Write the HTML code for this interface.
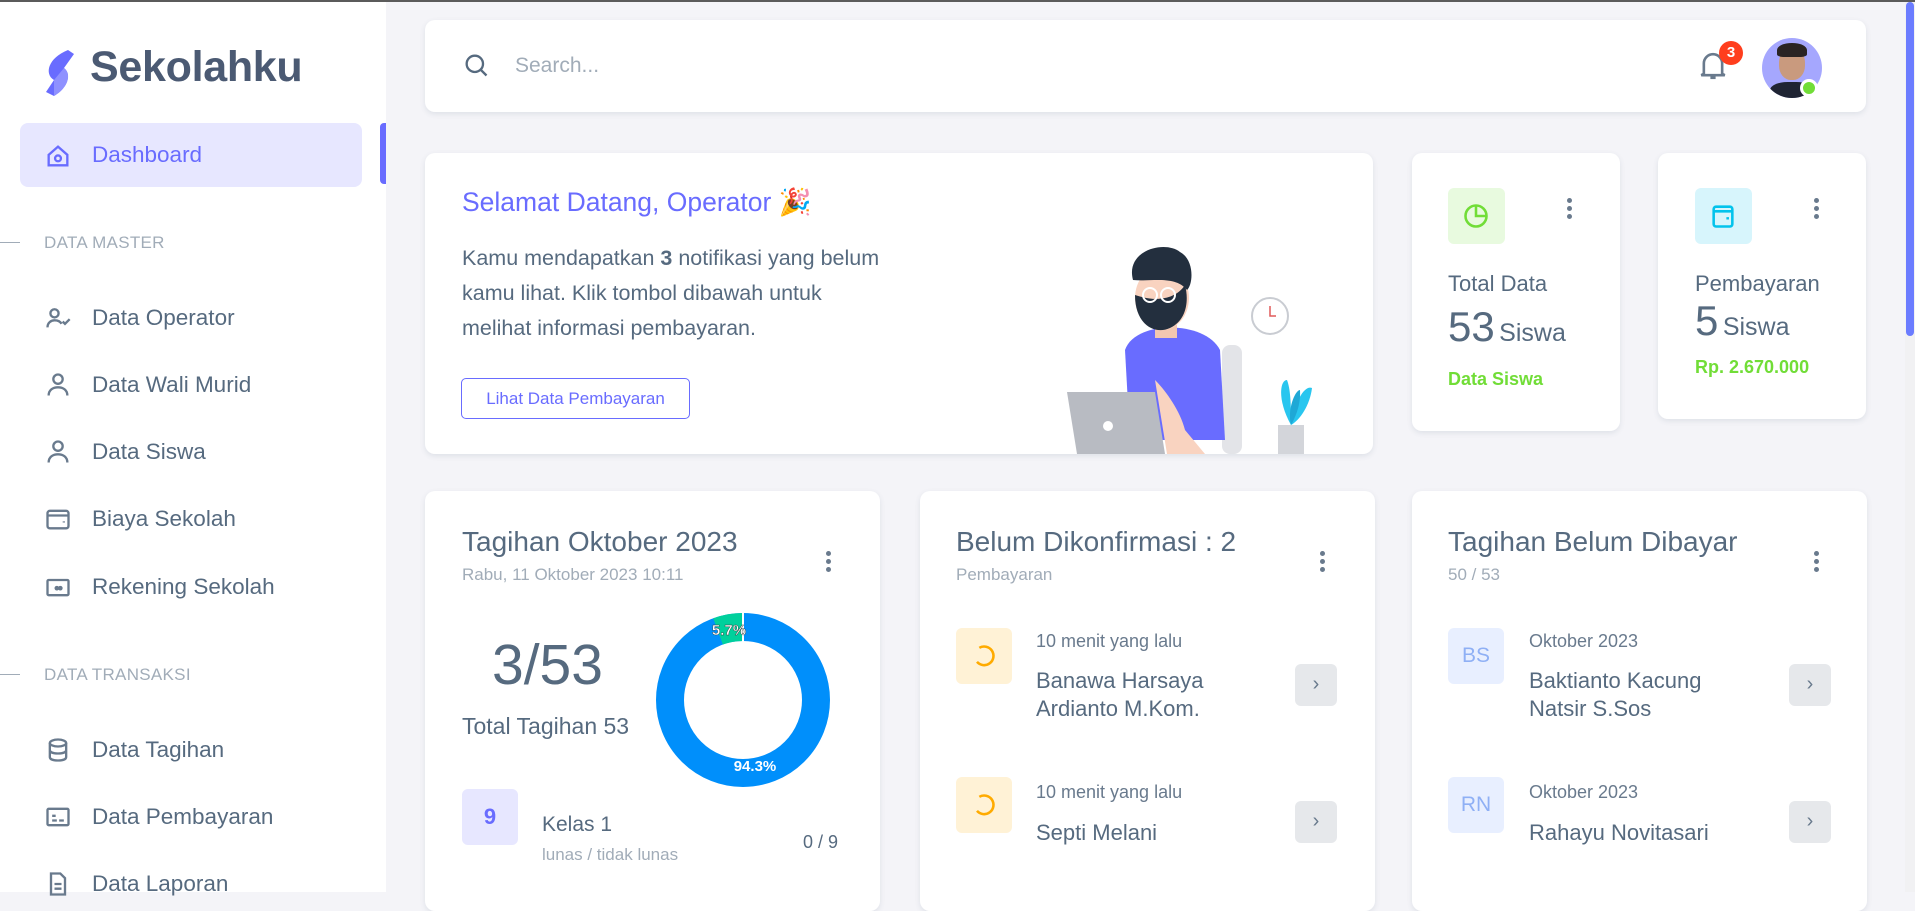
<!DOCTYPE html>
<html><head><meta charset="utf-8">
<style>
*{margin:0;padding:0;box-sizing:border-box}
body{width:1915px;height:892px;overflow:hidden;background:#f4f4f8;font-family:"Liberation Sans",sans-serif;color:#566a7f;position:relative}
.a{position:absolute}
.topline{left:0;top:0;width:1915px;height:2px;background:#5b5b5b}
.side{left:0;top:2px;width:386px;height:890px;background:#fff}
.card{position:absolute;background:#fff;border-radius:10px;box-shadow:0 2px 6px rgba(67,89,113,.12)}
.nav{position:absolute;left:92px;font-size:22.5px;color:#566a7f;line-height:1}
.ico{position:absolute;left:44px}
.sec{position:absolute;left:44px;font-size:17px;color:#a1acb8;letter-spacing:.3px}
.secl{position:absolute;left:0;width:20px;height:1px;background:#a1acb8}
.dots{position:absolute;width:5px}
.dots i{display:block;width:5px;height:5px;border-radius:50%;background:#697a8d;margin-bottom:3px}
.btnr{position:absolute;width:42px;height:42px;border-radius:6px;background:#e6e8eb;color:#697a8d;font-size:20px;text-align:center;line-height:40px}
</style></head><body>
<div class="a topline"></div>
<div class="a side"></div>
<svg class="a" style="left:42px;top:48px" width="34" height="50" viewBox="0 0 34 50">
<path d="M26 2 L32 6 L22 20 C30 26 26 40 12 48 L4 44 L12 32 C2 26 6 10 26 2Z" fill="#696cff"/>
<path d="M12 32 L22 20 C30 26 26 40 12 48 Z" fill="#8f91ff"/>
</svg>
<div class="a" style="left:90px;top:43px;font-size:43px;font-weight:bold;color:#4b5a73;letter-spacing:-.3px">Sekolahku</div>
<div class="a" style="left:20px;top:123px;width:342px;height:64px;background:#e7e7ff;border-radius:8px"></div>
<div class="a" style="left:380px;top:123px;width:6px;height:61px;background:#696cff;border-radius:4px 0 0 4px"></div>
<svg class="ico" style="top:142px" width="28" height="28" viewBox="0 0 24 24" fill="none" stroke="#696cff" stroke-width="2"><path d="M4 11 L12 4 L20 11 V20 H4Z"/><circle cx="12" cy="14" r="2.5"/></svg>
<div class="nav" style="top:144px;color:#696cff">Dashboard</div>
<div class="secl" style="top:242px"></div><div class="sec" style="top:233px">DATA MASTER</div>
<svg class="ico" style="top:304px" width="28" height="28" viewBox="0 0 24 24" fill="none" stroke="#697a8d" stroke-width="2"><circle cx="9" cy="8" r="3.5"/><path d="M3 20c0-4 3-6 6-6s5 1 6 3"/><path d="M16 15l2 2 4-4"/></svg>
<div class="nav" style="top:307px">Data Operator</div>
<svg class="ico" style="top:371px" width="28" height="28" viewBox="0 0 24 24" fill="none" stroke="#697a8d" stroke-width="2"><circle cx="12" cy="7" r="4"/><path d="M4 21c0-5 4-7 8-7s8 2 8 7"/></svg>
<div class="nav" style="top:374px">Data Wali Murid</div>
<svg class="ico" style="top:438px" width="28" height="28" viewBox="0 0 24 24" fill="none" stroke="#697a8d" stroke-width="2"><circle cx="12" cy="7" r="4"/><path d="M4 21c0-5 4-7 8-7s8 2 8 7"/></svg>
<div class="nav" style="top:441px">Data Siswa</div>
<svg class="ico" style="top:505px" width="28" height="28" viewBox="0 0 24 24" fill="none" stroke="#697a8d" stroke-width="2"><rect x="3" y="5" width="18" height="15" rx="2"/><path d="M3 9h18M17 14v1"/></svg>
<div class="nav" style="top:508px">Biaya Sekolah</div>
<svg class="ico" style="top:573px" width="28" height="28" viewBox="0 0 24 24" fill="none" stroke="#697a8d" stroke-width="2"><rect x="3" y="6" width="18" height="13" rx="1"/><circle cx="11" cy="13" r="1" fill="#697a8d"/><circle cx="14" cy="13" r="1" fill="#697a8d"/></svg>
<div class="nav" style="top:576px">Rekening Sekolah</div>
<div class="secl" style="top:674px"></div><div class="sec" style="top:665px">DATA TRANSAKSI</div>
<svg class="ico" style="top:736px" width="28" height="28" viewBox="0 0 24 24" fill="none" stroke="#697a8d" stroke-width="2"><ellipse cx="12" cy="6" rx="7" ry="3"/><path d="M5 6v12c0 2 3 3 7 3s7-1 7-3V6M5 12c0 2 3 3 7 3s7-1 7-3"/></svg>
<div class="nav" style="top:739px">Data Tagihan</div>
<svg class="ico" style="top:803px" width="28" height="28" viewBox="0 0 24 24" fill="none" stroke="#697a8d" stroke-width="2"><rect x="3" y="5" width="18" height="14" rx="1"/><path d="M7 11h3M7 15h4M13 15h4"/></svg>
<div class="nav" style="top:806px">Data Pembayaran</div>
<svg class="ico" style="top:870px" width="28" height="28" viewBox="0 0 24 24" fill="none" stroke="#697a8d" stroke-width="2"><path d="M6 3h8l4 4v14H6Z"/><path d="M9 12h6M9 16h6"/></svg>
<div class="nav" style="top:873px">Data Laporan</div>

<div class="a" style="left:1905px;top:2px;width:10px;height:890px;background:#f1f1f3"></div>
<div class="a" style="left:1906px;top:2px;width:8px;height:334px;background:#6b7cff;border-radius:4px"></div>

<div class="card" style="left:425px;top:20px;width:1441px;height:92px"></div>
<svg class="a" style="left:462px;top:51px" width="28" height="28" viewBox="0 0 24 24" fill="none" stroke="#566a7f" stroke-width="2"><circle cx="11" cy="11" r="7"/><path d="M16 16l5 5"/></svg>
<div class="a" style="left:515px;top:54px;font-size:21px;color:#a1acb8">Search...</div>
<svg class="a" style="left:1697px;top:49px" width="32" height="34" viewBox="0 0 24 26" fill="none" stroke="#697a8d" stroke-width="2"><path d="M5 19V11a7 7 0 0 1 14 0v8l2 1H3Z"/><path d="M10 22h4"/></svg>
<div class="a" style="left:1719px;top:41px;width:24px;height:24px;border-radius:50%;background:#ff3e1d;color:#fff;font-size:15px;text-align:center;line-height:24px;font-weight:bold">3</div>
<div class="a" style="left:1762px;top:38px;width:60px;height:60px;border-radius:50%;background:#a5a7fe;overflow:hidden">
<div class="a" style="left:17px;top:10px;width:26px;height:32px;border-radius:45%;background:#c99a7e"></div>
<div class="a" style="left:15px;top:5px;width:30px;height:14px;border-radius:50% 50% 20% 20%;background:#2a2424"></div>
<div class="a" style="left:8px;top:44px;width:44px;height:20px;border-radius:40% 40% 0 0;background:#1f2433"></div>
</div>
<div class="a" style="left:1800px;top:79px;width:18px;height:18px;border-radius:50%;background:#71dd37;border:3px solid #fff"></div>

<div class="card" style="left:425px;top:153px;width:948px;height:301px"></div>
<div class="a" style="left:462px;top:187px;font-size:26.5px;color:#696cff">Selamat Datang, Operator 🎉</div>
<div class="a" style="left:462px;top:241px;width:432px;font-size:21.5px;line-height:35px;color:#566a7f">Kamu mendapatkan <b>3</b> notifikasi yang belum kamu lihat. Klik tombol dibawah untuk melihat informasi pembayaran.</div>
<div class="a" style="left:461px;top:378px;width:229px;height:41px;border:1px solid #696cff;border-radius:5px;color:#696cff;font-size:17px;text-align:center;line-height:39px">Lihat Data Pembayaran</div>
<svg class="a" style="left:1055px;top:240px" width="270" height="214" viewBox="0 0 270 214">
<rect x="167" y="105" width="20" height="109" rx="8" fill="#e3e4e8"/>
<path d="M70 110 C80 80 150 80 165 110 L170 200 L75 200 Z" fill="#696cff"/>
<rect x="100" y="78" width="22" height="20" fill="#f2c7b1"/>
<ellipse cx="107" cy="58" rx="27" ry="32" fill="#f9d3c0"/>
<path d="M80 55 C80 85 100 95 115 88 C132 80 134 60 130 45 C120 60 100 62 80 55Z" fill="#232f3e"/>
<path d="M78 40 C70 10 110 0 125 12 C140 20 138 45 132 50 C120 35 95 42 78 40Z" fill="#232f3e"/>
<circle cx="95" cy="55" r="7" fill="none" stroke="#fff" stroke-width="2"/><circle cx="113" cy="55" r="7" fill="none" stroke="#fff" stroke-width="2"/>
<circle cx="215" cy="76" r="18" fill="#fff" stroke="#c9ccd2" stroke-width="2"/><path d="M215 66v10h6" stroke="#e05a5a" stroke-width="1.5" fill="none"/>
<path d="M12 152 H100 L110 214 H22Z" fill="#b8bbc2"/>
<circle cx="53" cy="186" r="5" fill="#fff"/>
<path d="M100 140 C110 150 125 170 130 190 L150 214 H112Z" fill="#f9d3c0"/>
<rect x="223" y="185" width="26" height="29" fill="#d3d5da"/>
<path d="M236 185 C222 160 225 140 232 140 C236 150 236 170 236 185Z" fill="#29c6ef"/>
<path d="M236 185 C240 160 250 145 257 148 C255 165 245 180 236 185Z" fill="#29c6ef"/>
<path d="M236 185 C232 170 240 150 245 150 C246 165 240 178 236 185Z" fill="#1fa8d6"/>
</svg>

<div class="card" style="left:1412px;top:153px;width:208px;height:278px"></div>
<div class="a" style="left:1448px;top:188px;width:57px;height:56px;border-radius:6px;background:#e8fadf"></div>
<svg class="a" style="left:1462px;top:202px" width="28" height="28" viewBox="0 0 24 24" fill="none" stroke="#71dd37" stroke-width="2.2"><circle cx="12" cy="12" r="9"/><path d="M12 3v9h9"/></svg>
<div class="dots" style="left:1567px;top:198px"><i></i><i></i><i></i></div>
<div class="a" style="left:1448px;top:271px;font-size:22px;color:#566a7f">Total Data</div>
<div class="a" style="left:1448px;top:303px;color:#566a7f"><span style="font-size:42px">53</span> <span style="font-size:25px">Siswa</span></div>
<div class="a" style="left:1448px;top:369px;font-size:18px;font-weight:bold;color:#71dd37">Data Siswa</div>

<div class="card" style="left:1658px;top:153px;width:208px;height:266px"></div>
<div class="a" style="left:1695px;top:188px;width:57px;height:56px;border-radius:6px;background:#d7f5fc"></div>
<svg class="a" style="left:1709px;top:202px" width="28" height="28" viewBox="0 0 24 24" fill="none" stroke="#03c3ec" stroke-width="2.2"><rect x="4" y="4" width="16" height="17" rx="2"/><path d="M4 8h16M16 13v2"/></svg>
<div class="dots" style="left:1814px;top:198px"><i></i><i></i><i></i></div>
<div class="a" style="left:1695px;top:271px;font-size:22px;color:#566a7f">Pembayaran</div>
<div class="a" style="left:1695px;top:297px;color:#566a7f"><span style="font-size:42px">5</span> <span style="font-size:25px">Siswa</span></div>
<div class="a" style="left:1695px;top:357px;font-size:18px;font-weight:bold;color:#71dd37">Rp. 2.670.000</div>

<div class="card" style="left:425px;top:491px;width:455px;height:420px"></div>
<div class="a" style="left:462px;top:526px;font-size:28px;color:#566a7f">Tagihan Oktober 2023</div>
<div class="a" style="left:462px;top:565px;font-size:17px;color:#a1acb8">Rabu, 11 Oktober 2023 10:11</div>
<div class="dots" style="left:826px;top:551px"><i></i><i></i><i></i></div>
<div class="a" style="left:492px;top:632px;font-size:57px;color:#566a7f">3/53</div>
<div class="a" style="left:462px;top:713px;font-size:23px;color:#566a7f">Total Tagihan 53</div>
<svg class="a" style="left:655px;top:612px" width="176" height="176" viewBox="0 0 176 176">
<circle cx="88" cy="88" r="73" fill="none" stroke="#008ffb" stroke-width="28"/>
<circle cx="88" cy="88" r="73" fill="none" stroke="#00d09c" stroke-width="28" stroke-dasharray="26 433" transform="rotate(-110 88 88)"/>
<line x1="88" y1="1" x2="88" y2="30" stroke="#fff" stroke-width="2"/>
<text x="74" y="23" font-size="15" font-weight="bold" fill="#fff" stroke="#333" stroke-width=".4" text-anchor="middle" font-family="Liberation Sans">5.7%</text>
<text x="100" y="159" font-size="15" font-weight="bold" fill="#fff" text-anchor="middle" font-family="Liberation Sans">94.3%</text>
</svg>
<div class="a" style="left:462px;top:789px;width:56px;height:56px;border-radius:6px;background:#e7e7ff;color:#696cff;font-size:22px;font-weight:bold;text-align:center;line-height:56px">9</div>
<div class="a" style="left:542px;top:813px;font-size:21px;color:#566a7f">Kelas 1</div>
<div class="a" style="left:542px;top:845px;font-size:17px;color:#a1acb8">lunas / tidak lunas</div>
<div class="a" style="left:803px;top:832px;font-size:18px;color:#566a7f">0 / 9</div>

<div class="card" style="left:920px;top:491px;width:455px;height:420px"></div>
<div class="a" style="left:956px;top:526px;font-size:28px;color:#566a7f">Belum Dikonfirmasi : 2</div>
<div class="a" style="left:956px;top:565px;font-size:17px;color:#a1acb8">Pembayaran</div>
<div class="dots" style="left:1320px;top:551px"><i></i><i></i><i></i></div>
<div class="a" style="left:956px;top:628px;width:56px;height:56px;border-radius:6px;background:#fff2d6"></div>
<svg class="a" style="left:970px;top:642px" width="28" height="28" viewBox="0 0 24 24" fill="none" stroke="#ffab00" stroke-width="2.2"><path d="M8 5a8 8 0 1 1 -2 12"/></svg>
<div class="a" style="left:1036px;top:631px;font-size:18px;color:#697a8d">10 menit yang lalu</div>
<div class="a" style="left:1036px;top:667px;font-size:22px;line-height:28px;color:#566a7f">Banawa Harsaya<br>Ardianto M.Kom.</div>
<div class="btnr" style="left:1295px;top:664px">›</div>
<div class="a" style="left:956px;top:777px;width:56px;height:56px;border-radius:6px;background:#fff2d6"></div>
<svg class="a" style="left:970px;top:791px" width="28" height="28" viewBox="0 0 24 24" fill="none" stroke="#ffab00" stroke-width="2.2"><path d="M8 5a8 8 0 1 1 -2 12"/></svg>
<div class="a" style="left:1036px;top:782px;font-size:18px;color:#697a8d">10 menit yang lalu</div>
<div class="a" style="left:1036px;top:820px;font-size:22px;color:#566a7f">Septi Melani</div>
<div class="btnr" style="left:1295px;top:801px">›</div>

<div class="card" style="left:1412px;top:491px;width:455px;height:420px"></div>
<div class="a" style="left:1448px;top:526px;font-size:28px;color:#566a7f">Tagihan Belum Dibayar</div>
<div class="a" style="left:1448px;top:565px;font-size:17px;color:#a1acb8">50 / 53</div>
<div class="dots" style="left:1814px;top:551px"><i></i><i></i><i></i></div>
<div class="a" style="left:1448px;top:628px;width:56px;height:56px;border-radius:6px;background:#e8efff;color:#8fb0f5;font-size:21px;text-align:center;line-height:56px">BS</div>
<div class="a" style="left:1529px;top:631px;font-size:18px;color:#697a8d">Oktober 2023</div>
<div class="a" style="left:1529px;top:667px;font-size:22px;line-height:28px;color:#566a7f">Baktianto Kacung<br>Natsir S.Sos</div>
<div class="btnr" style="left:1789px;top:664px">›</div>
<div class="a" style="left:1448px;top:777px;width:56px;height:56px;border-radius:6px;background:#e8efff;color:#8fb0f5;font-size:21px;text-align:center;line-height:56px">RN</div>
<div class="a" style="left:1529px;top:782px;font-size:18px;color:#697a8d">Oktober 2023</div>
<div class="a" style="left:1529px;top:820px;font-size:22px;color:#566a7f">Rahayu Novitasari</div>
<div class="btnr" style="left:1789px;top:801px">›</div>
</body></html>
